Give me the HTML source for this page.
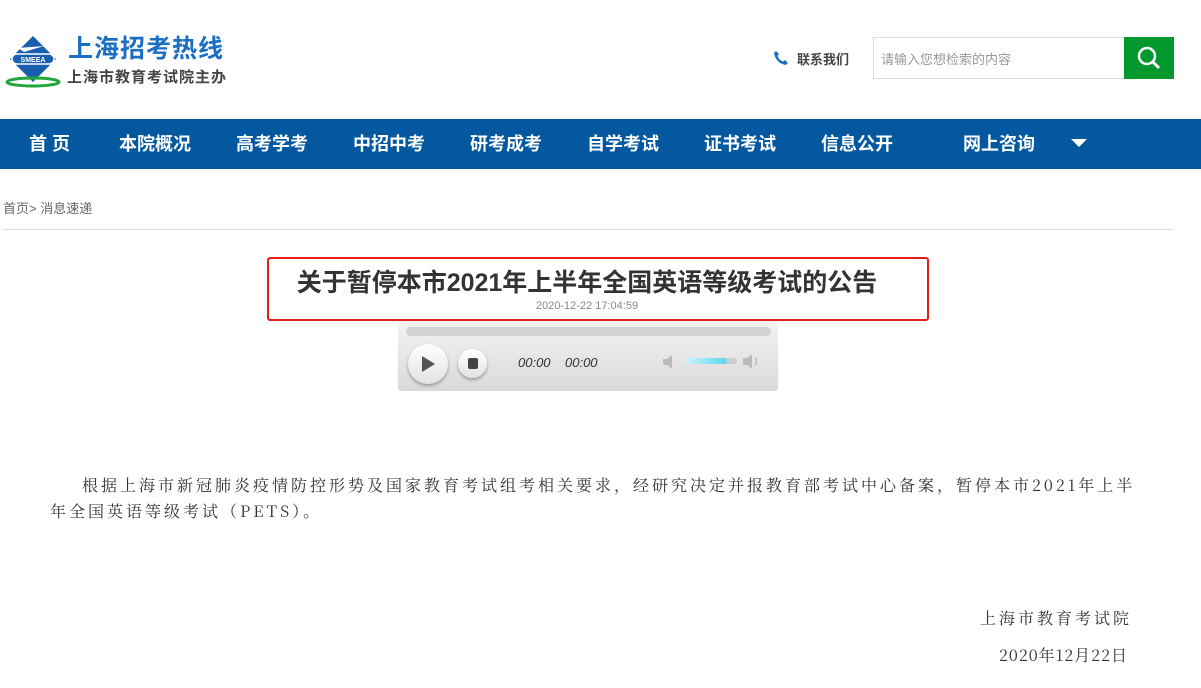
<!DOCTYPE html>
<html><head><meta charset="utf-8"><style>
*{margin:0;padding:0;box-sizing:border-box}
body{width:1201px;height:688px;background:#fff;font-family:"Liberation Sans","Noto Sans CJK SC",sans-serif;position:relative;overflow:hidden}
.abs{position:absolute}
.nav{top:119px;left:0;width:1201px;height:50px;background:#0358a0}
.nav span{position:absolute;top:14px;color:#fff;font-weight:bold;font-size:18px;line-height:22px;white-space:nowrap}
.ser{font-family:"Noto Serif CJK SC","Liberation Serif",serif;font-size:16px;letter-spacing:3px;color:#333}
</style></head><body>
<svg class="abs" style="left:4px;top:34px" width="58" height="54" viewBox="0 0 58 54">
<polygon points="29,2 52,25 29,48 6,25" fill="#1a5fae"/>
<rect x="8" y="20" width="42" height="10" rx="5" fill="#1a5fae" stroke="#fff" stroke-width="1.5"/>
<text x="29" y="28" font-size="7" fill="#fff" text-anchor="middle" font-weight="bold" font-family="Liberation Sans">SMEEA</text>
<path d="M14 14 L40 12 L20 18Z" fill="#fff"/>
<ellipse cx="29" cy="48" rx="26" ry="4" fill="none" stroke="#1fa53a" stroke-width="3"/>
</svg>
<div class="abs" style="left:68px;top:29px;font-size:25px;font-weight:bold;color:#1a6fc4;letter-spacing:1px">上海招考热线</div>
<div class="abs" style="left:67px;top:66px;font-size:15px;font-weight:bold;color:#444;letter-spacing:1px">上海市教育考试院主办</div>
<svg class="abs" style="left:773px;top:50px" width="16" height="16" viewBox="0 0 16 16"><path d="M3 1 L6 4 L4.5 6 Q6 10 10 11.5 L12 10 L15 13 L12.5 15 Q3 13 1 3Z" fill="#1a6fc4"/></svg>
<div class="abs" style="left:797px;top:49px;font-size:13px;font-weight:bold;color:#444">联系我们</div>
<div class="abs" style="left:873px;top:37px;width:252px;height:42px;border:1px solid #ddd"></div>
<div class="abs" style="left:881px;top:49px;font-size:13px;color:#999">请输入您想检索的内容</div>
<div class="abs" style="left:1124px;top:37px;width:50px;height:42px;background:#03982e"></div>
<svg class="abs" style="left:1134px;top:43px" width="30" height="30" viewBox="0 0 30 30"><circle cx="13" cy="13" r="8" fill="none" stroke="#fff" stroke-width="2.5"/><path d="M19 19 L25 25" stroke="#fff" stroke-width="3"/></svg>
<div class="abs nav">
<span style="left:29px">首 页</span><span style="left:119px">本院概况</span><span style="left:236px">高考学考</span><span style="left:353px">中招中考</span><span style="left:470px">研考成考</span><span style="left:587px">自学考试</span><span style="left:704px">证书考试</span><span style="left:821px">信息公开</span><span style="left:963px">网上咨询</span>
<svg style="position:absolute;left:1071px;top:20px" width="16" height="10"><polygon points="0,0 16,0 8,8" fill="#fff"/></svg>
</div>
<div class="abs" style="left:3px;top:198px;font-size:13px;color:#666">首页&gt; 消息速递</div>
<div class="abs" style="left:3px;top:229px;width:1170px;height:1px;background:#ddd"></div>
<div class="abs" style="left:267px;top:257px;width:662px;height:64px;border:2px solid #e51c1c;border-radius:3px"></div>
<div class="abs" style="left:256px;top:263px;width:662px;text-align:center;font-size:25px;font-weight:bold;color:#333">关于暂停本市2021年上半年全国英语等级考试的公告</div>
<div class="abs" style="left:256px;top:300px;width:662px;text-align:center;font-size:11px;color:#888">2020-12-22 17:04:59</div>
<div class="abs" style="left:398px;top:321px;width:380px;height:70px;background:linear-gradient(#f3f3f3,#dadada);border-radius:3px"></div>
<div class="abs" style="left:406px;top:327px;width:365px;height:9px;background:#d3d3d3;border-radius:5px"></div>
<div class="abs" style="left:408px;top:344px;width:40px;height:40px;border-radius:50%;background:linear-gradient(#fff,#e3e3e3);box-shadow:0 2px 3px #999"></div>
<svg class="abs" style="left:422px;top:356px" width="14" height="16"><polygon points="0,0 13,8 0,16" fill="#555"/></svg>
<div class="abs" style="left:458px;top:349px;width:29px;height:29px;border-radius:50%;background:linear-gradient(#fff,#e3e3e3);box-shadow:0 2px 3px #999"></div>
<div class="abs" style="left:468px;top:358px;width:10px;height:11px;background:#444;border-radius:2px"></div>
<div class="abs" style="left:518px;top:355px;font-size:13px;font-style:italic;color:#333">00:00</div>
<div class="abs" style="left:565px;top:355px;font-size:13px;font-style:italic;color:#333">00:00</div>
<svg class="abs" style="left:662px;top:354px" width="16" height="16"><path d="M1 5h4l5-4v14l-5-4H1z" fill="#bbb"/></svg>
<div class="abs" style="left:685px;top:358px;width:52px;height:6px;background:#ccc;border-radius:3px"></div>
<div class="abs" style="left:685px;top:358px;width:42px;height:6px;background:linear-gradient(90deg,#cff3fb,#5ad6f0);border-radius:3px"></div>
<svg class="abs" style="left:742px;top:353px" width="20" height="17"><path d="M1 5h4l5-4v15l-5-4H1z" fill="#bbb"/><path d="M13 5q3 3.5 0 7" stroke="#bbb" fill="none" stroke-width="1.5"/></svg>
<div class="abs ser" style="left:50px;top:472px;width:1090px;line-height:26px;text-indent:32px">根据上海市新冠肺炎疫情防控形势及国家教育考试组考相关要求，经研究决定并报教育部考试中心备案，暂停本市2021年上半年全国英语等级考试（PETS）。</div>
<div class="abs ser" style="left:980px;top:606px">上海市教育考试院</div>
<div class="abs ser" style="left:999px;top:643px;letter-spacing:1px">2020年12月22日</div>
</body></html>
